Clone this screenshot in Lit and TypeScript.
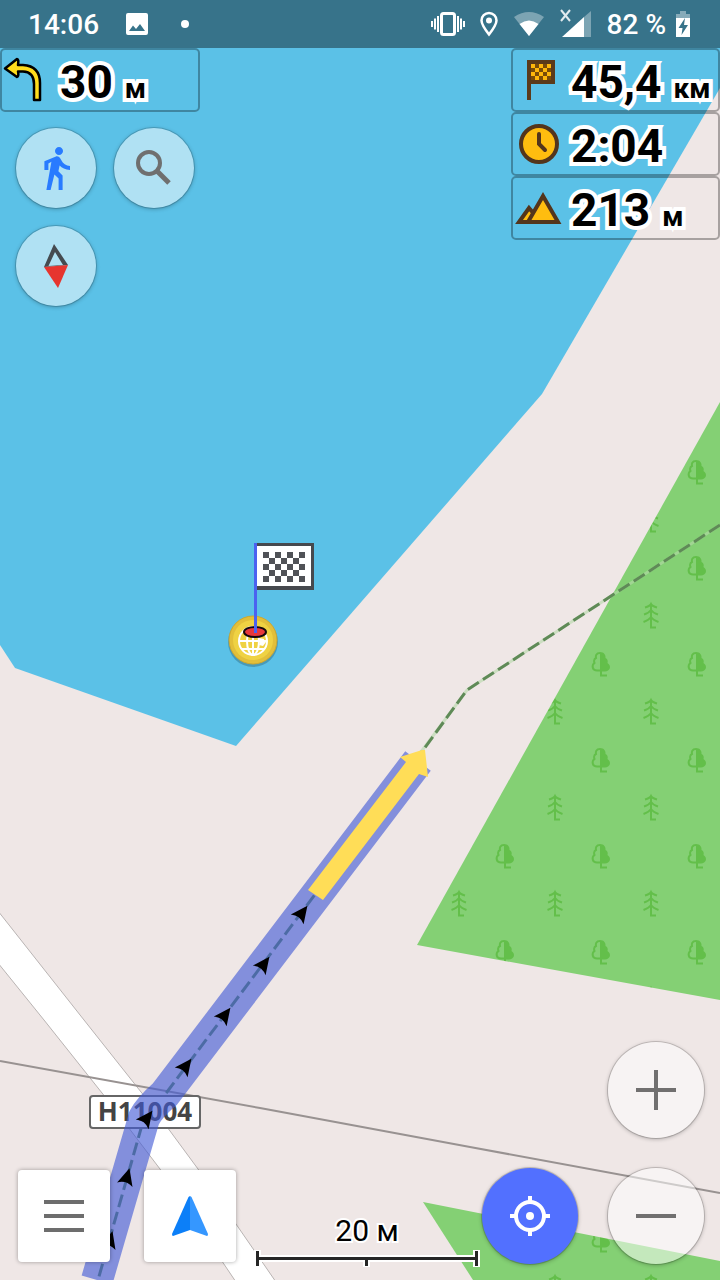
import { LitElement, html, svg, css, TemplateResult } from "lit";
import { customElement, property } from "lit/decorators.js";

// Direction arrows along the planned route: centre and heading in degrees.
const ROUTE_ARROWS = [
  { x: 302, y: 913, a: 37 },
  { x: 264, y: 964, a: 37 },
  { x: 225, y: 1015, a: 37 },
  { x: 186, y: 1066, a: 37 },
  { x: 147, y: 1118, a: 37 },
  { x: 127, y: 1177, a: 16 },
  { x: 110, y: 1240, a: 16 },
];

// Cells of a chequered flag, every second one filled.
const checks = (x: number, y: number, cols: number, rows: number, size: number, odd = 0) => {
  let d = "";
  for (let r = 0; r < rows; r++) {
    for (let c = 0; c < cols; c++) {
      if ((r + c) % 2 === odd) d += `M${x + c * size} ${y + r * size}h${size}v${size}h${-size}z`;
    }
  }
  return d;
};

@customElement("map-canvas")
export class MapCanvas extends LitElement {
  static styles = css`
    :host { display: block; }
    svg { display: block; width: 100%; height: 100%; }
    .shield { font: 700 26px "Noto Sans", "Open Sans", sans-serif; fill: #444; text-anchor: middle; }
  `;

  render() {
    return html`
      <svg viewBox="0 0 720 1280" preserveAspectRatio="xMidYMid slice" aria-hidden="true">
        <defs>
          <pattern id="forest" patternUnits="userSpaceOnUse" x="49" y="64" width="96" height="96">
            <rect width="96" height="96" fill="#84d074"></rect>
            <g fill="none" stroke="#63bf4a" stroke-width="2">
              <path d="M71 13C67 13 66.500 16 67 18C64.500 19 65 22 65.500 23C62.500 25 63 30.500 68 30.500H72"></path>
              <path fill="#63bf4a" stroke="none" d="M71 12C75 12 77 15 76.500 18C79 19 79 22 78.500 23C83 26 81 31.500 76 31.500H71z"></path>
              <path d="M72 31V35.500H78"></path>
              <path d="M26 60V83.500H31M20 63.500Q25 62 26 60Q27 62 32 63.500M19 70.500Q24 69 26 66Q28 69 33 70.500M18.500 78Q24 76 26 73Q28 76 33.500 78"></path>
            </g>
          </pattern>
        </defs>

        <rect width="720" height="1280" fill="#efe7e6"></rect>
        <path fill="#5bc1e7" d="M0 0H720V88L542 394L236 746L15 668L0 645z"></path>
        <path fill="url(#forest)" d="M720 402L417 945L720 1000z"></path>
        <path fill="url(#forest)" d="M423 1202L720 1261V1280H473z"></path>

        <path fill="#fff" stroke="#b9b4b3"
          d="M-2 911L84 1020L145 1097L198 1169L276 1282H236L160 1169L106 1098L44 1020L-2 963z"></path>
        <path fill="none" stroke="#989291" stroke-width="2" d="M0 1061L260 1108L470 1147L720 1193"></path>

        <g fill="none" stroke-width="3">
          <path stroke="#b4d9a8" stroke-opacity="0.6" d="M720 525L467 690L418 756"></path>
          <path stroke="#5f8a57" stroke-dasharray="13 5" d="M720 525L467 690L418 757L167 1092L144 1118L98 1280"></path>
        </g>

        <rect x="90" y="1096" width="110" height="32" rx="3" fill="#fff" stroke="#666" stroke-width="2"></rect>
        <text class="shield" x="145" y="1121">Н11004</text>

        <path fill="none" stroke="rgb(64,88,213)" stroke-opacity="0.620" stroke-width="32"
          d="M418 761L165 1094Q149 1108 144 1118L97 1280"></path>
        ${ROUTE_ARROWS.map(
          (p) => svg`<path transform="translate(${p.x} ${p.y}) rotate(${p.a})"
            d="M0 -9L8 8Q0 3 -8 8z"></path>`
        )}
        <path fill="#ffdd57" d="M308 890L406 762L400 757L422 750L425 750L428 777L419 774L323 900z"></path>

        <circle cx="253" cy="642" r="25" fill="#000" fill-opacity="0.200"></circle>
        <circle cx="253" cy="640" r="24" fill="#e2bf3a" stroke="#cda830"></circle>
        <circle cx="253" cy="640" r="20" fill="#efd243"></circle>
        <g fill="none" stroke="#fff" stroke-width="2">
          <circle cx="253" cy="641" r="14"></circle>
          <ellipse cx="253" cy="641" rx="6" ry="14"></ellipse>
          <path d="M253 627V655M239 641H267M242 649H264"></path>
        </g>
        <path fill="#fff" d="M259 638l5 1v3h2l-3 4l-4 -1l1 -3z"></path>
        <ellipse cx="255" cy="632" rx="11" ry="5" fill="#e8383c" stroke="#16090c" stroke-width="2"></ellipse>
        <path fill="#46494e" d="M256 543H314V590H256z"></path>
        <path fill="#fff" d="M256 546H311V586H256z"></path>
        <path fill="#505257" d="${checks(263, 552, 7, 5, 6)}"></path>
        <path fill="#4b62f0" d="M254 543H257V633H254z"></path>
      </svg>
    `;
  }
}

@customElement("nav-widget")
export class NavWidget extends LitElement {
  @property() value = "";
  @property() unit = "";

  static styles = css`
    :host {
      box-sizing: border-box;
      display: flex;
      align-items: center;
      gap: 10px;
      height: 64px;
      border: 2px solid rgba(0, 0, 0, 0.3);
      border-radius: 5px;
    }
    .text {
      display: flex;
      align-items: baseline;
      gap: 12px;
      padding-top: 4px;
      color: #000;
      font: 700 46px/54px Roboto, sans-serif;
      white-space: nowrap;
      -webkit-text-stroke: 8px #fff;
      paint-order: stroke fill;
    }
    .unit { font-size: 28px; line-height: 28px; }
  `;

  render() {
    return html`
      <slot></slot>
      <div class="text">
        <span>${this.value}</span>${this.unit ? html`<span class="unit">${this.unit}</span>` : null}
      </div>
    `;
  }
}

@customElement("app-root")
export class AppRoot extends LitElement {
  static styles = css`
    :host { display: block; font-family: Roboto, sans-serif; }
    .screen {
      position: relative;
      display: flex;
      flex-direction: column;
      min-height: 100vh;
      overflow: hidden;
    }
    .map { position: absolute; inset: 0; }
    svg { display: block; flex: none; overflow: visible; }

    .status {
      position: relative;
      display: flex;
      align-items: center;
      height: 48px;
      padding: 0 28px;
      background: #37738a;
      color: #fff;
      font-size: 28px;
      font-weight: 500;
      line-height: 48px;
      white-space: nowrap;
    }
    .clock { padding-top: 2px; margin-right: 26px; }
    .notices { display: flex; align-items: center; gap: 32px; }
    .system { display: flex; align-items: center; gap: 15px; margin-left: auto; }
    .charge { padding-top: 2px; }
    .battery { display: flex; align-items: center; gap: 8px; }

    .top {
      position: relative;
      display: flex;
      justify-content: space-between;
      align-items: flex-start;
    }
    .turn { width: 200px; }
    .info { width: 209px; }
    .quick {
      display: grid;
      grid-template-columns: 80px 80px;
      gap: 18px;
      padding: 16px;
    }

    button {
      display: flex;
      align-items: center;
      justify-content: center;
      flex: none;
      margin: 0;
      padding: 0;
      border: 0;
      cursor: pointer;
    }
    .round {
      width: 80px;
      height: 80px;
      border-radius: 50%;
      background: rgba(255, 255, 255, 0.52);
      box-shadow: 0 0 0 1px rgba(0, 0, 0, 0.15), 0 1px 4px rgba(0, 0, 0, 0.3);
    }
    .large { width: 96px; height: 96px; }
    .accent { background: #5270ff; }
    .square {
      width: 92px;
      height: 92px;
      border-radius: 4px;
      background: #fff;
      box-shadow: 0 0 4px rgba(0, 0, 0, 0.35);
    }

    .bottom {
      position: relative;
      display: flex;
      align-items: flex-end;
      margin-top: auto;
      padding: 0 16px 16px 18px;
    }
    .menu { display: flex; gap: 34px; padding-bottom: 2px; }
    .scale {
      display: flex;
      flex-direction: column;
      align-items: center;
      margin-left: 20px;
      color: #000;
      font-size: 30px;
      line-height: 34px;
      -webkit-text-stroke: 4px #fff;
      paint-order: stroke fill;
    }
    .actions { display: flex; align-items: flex-end; gap: 30px; margin-left: auto; }
    .zoom { display: flex; flex-direction: column; gap: 30px; }
  `;

  private statusBar(): TemplateResult {
    return html`
      <header class="status">
        <span class="clock">14:06</span>
        <span class="notices">
          <svg width="24" height="24" viewBox="0 0 24 24" fill="#fff" fill-rule="evenodd">
            <path d="M3 1H21Q23 1 23 3V21Q23 23 21 23H3Q1 23 1 21V3Q1 1 3 1zM4 19H20L15 12L11 17L8 13.500z"></path>
          </svg>
          <svg width="10" height="10" viewBox="0 0 10 10"><circle cx="4" cy="5" r="4" fill="#fff"></circle></svg>
        </span>
        <span class="system">
          <svg width="34" height="24" viewBox="0 0 34 24" fill="none" stroke="#fff">
            <rect x="10.500" y="1.500" width="13" height="21" rx="2" stroke-width="3"></rect>
            <path stroke-width="2" d="M7 4V20M4 6.500V17.500M1 9V15M27 4V20M30 6.500V17.500M33 9V15"></path>
          </svg>
          <svg width="18" height="24" viewBox="0 0 18 24">
            <path fill="none" stroke="#fff" stroke-width="2.500" d="M9 22.500C4 16 1.500 12.500 1.500 8.500A7.500 7.500 0 0 1 16.500 8.500C16.500 12.500 14 16 9 22.500z"></path>
            <circle cx="9" cy="8.500" r="3" fill="#fff"></circle>
          </svg>
          <svg width="32" height="24" viewBox="0 0 32 24" fill="#fff">
            <path fill-opacity="0.350" d="M16 24L1 5Q16 -5 31 5z"></path>
            <path d="M16 24L6.500 12Q16 5 25.500 12z"></path>
          </svg>
          <svg width="32" height="26" viewBox="0 0 32 26" fill="#fff">
            <path fill-opacity="0.350" d="M31 0V26H24V6z"></path>
            <path d="M24 6V26H2z"></path>
            <path fill="none" stroke="#fff" stroke-width="2" stroke-opacity="0.850" d="M1 -1L10 10M10 -1L1 10"></path>
          </svg>
          <span class="battery">
            <span class="charge">82 %</span>
            <svg width="18" height="28" viewBox="0 0 18 28">
              <path fill="#fff" fill-opacity="0.400" d="M6 1H12V4H16V8H2V4H6z"></path>
              <path fill="#fff" d="M2 8H16V27H2z"></path>
              <path fill="#37738a" d="M11 8L4.500 18H8.500L7.500 25L14 15H10z"></path>
            </svg>
          </span>
        </span>
      </header>
    `;
  }

  render() {
    return html`
      <main class="screen">
        <map-canvas class="map"></map-canvas>
        ${this.statusBar()}

        <section class="top">
          <div>
            <nav-widget class="turn" value="30" unit="м">
              <svg width="48" height="60" viewBox="2 50 48 60">
                <path fill="#ffdd1c" stroke="#000" stroke-width="2.500" stroke-linejoin="round"
                  d="M5 68.500L17 59Q19 59 18 65H23Q40 66 40 83V100H34V84Q34 72 23 71.500H18Q19 76 17 77z"></path>
              </svg>
            </nav-widget>
            <div class="quick">
              <button class="round" aria-label="Пешком">
                <svg width="48" height="48" viewBox="0 0 24 24" fill="#287bff">
                  <path d="M13.500 5.500c1.100 0 2-.9 2-2s-.9-2-2-2-2 .9-2 2 .9 2 2 2z"></path>
                  <path d="M6.200 13V8.600L12 6.200C13.300 6 14 6.800 14.600 8C15.500 9.800 17 10.800 19 11V13C16.600 13 15 12 13.800 10.800L13.200 13.600L15.300 15.700V23H13.300V17.200L11.200 15.200L9.300 23H7.200L9.700 8.900L8.200 9.700V13z"></path>
                </svg>
              </button>
              <button class="round" aria-label="Поиск">
                <svg width="48" height="48" viewBox="0 0 48 48" fill="none" stroke="#6f6f6f">
                  <circle cx="19" cy="19" r="11" stroke-width="4"></circle>
                  <path stroke-width="5" d="M27 27L39 39"></path>
                </svg>
              </button>
              <button class="round" aria-label="Компас">
                <svg width="48" height="48" viewBox="0 0 48 48">
                  <path fill="#454b50" fill-rule="evenodd" d="M22 2L36 23L25 24L12 25zM23 10L16.500 24L31 23z"></path>
                  <path fill="#e6352f" d="M12 25L36 23L26 46z"></path>
                </svg>
              </button>
            </div>
          </div>

          <div class="info">
            <nav-widget value="45,4" unit="км">
              <svg width="48" height="60" viewBox="513 50 48 60">
                <path fill="#5b3a1a" d="M527 60H555V84H531V100H527z"></path>
                <path fill="#ffb70a" d="M531 64H551V80H531z"></path>
                <path fill="#7a4c08" d="${checks(531, 64, 5, 4, 4, 1)}"></path>
              </svg>
            </nav-widget>
            <nav-widget value="2:04">
              <svg width="48" height="60" viewBox="513 114 48 60">
                <circle cx="539" cy="144" r="18" fill="#ffbd0f" stroke="#53351c" stroke-width="4"></circle>
                <path fill="none" stroke="#53351c" stroke-width="4" stroke-linecap="round" d="M539 134V144L545 150"></path>
              </svg>
            </nav-widget>
            <nav-widget value="213" unit="м">
              <svg width="48" height="60" viewBox="513 178 48 60">
                <g fill="#ffbd0f" stroke="#53351c" stroke-width="4">
                  <path d="M529 208L541 222H519z"></path>
                  <path d="M543 196L558 222H528z"></path>
                </g>
              </svg>
            </nav-widget>
          </div>
        </section>

        <section class="bottom">
          <div class="menu">
            <button class="square" aria-label="Меню">
              <svg width="40" height="32" viewBox="0 0 40 32">
                <path stroke="#6d6d6d" stroke-width="4" d="M0 2H40M0 16H40M0 30H40"></path>
              </svg>
            </button>
            <button class="square" aria-label="Навигация">
              <svg width="36" height="40" viewBox="0 0 36 40">
                <path fill="#0c7ff8" d="M18 0V34L1 40Q0 40 0 38L16.500 1z"></path>
                <path fill="#3597ff" d="M18 0L19.500 1L36 38Q36 40 35 40L18 34z"></path>
              </svg>
            </button>
          </div>

          <div class="scale">
            <span>20 м</span>
            <svg width="222" height="16" viewBox="0 0 222 16">
              <path fill="none" stroke="#fff" stroke-width="7" d="M1.500 2V19M220.500 2V19M1 10.500H221M110.500 10V19"></path>
              <path fill="none" stroke="#262626" stroke-width="3" d="M1.500 3V18M220.500 3V18M1 10.500H221M110.500 10V18"></path>
            </svg>
          </div>

          <div class="actions">
            <button class="round large accent" aria-label="Моё местоположение">
              <svg width="40" height="40" viewBox="0 0 40 40">
                <circle cx="20" cy="20" r="14" fill="none" stroke="#fff" stroke-width="4"></circle>
                <circle cx="20" cy="20" r="4" fill="#fff"></circle>
                <path stroke="#fff" stroke-width="4" d="M20 0V6M20 34V40M0 20H6M34 20H40"></path>
              </svg>
            </button>
            <div class="zoom">
              <button class="round large" aria-label="Приблизить">
                <svg width="40" height="40" viewBox="0 0 40 40"><path stroke="#716f6f" stroke-width="4" d="M20 0V40M0 20H40"></path></svg>
              </button>
              <button class="round large" aria-label="Отдалить">
                <svg width="40" height="40" viewBox="0 0 40 40"><path stroke="#716f6f" stroke-width="4" d="M0 20H40"></path></svg>
              </button>
            </div>
          </div>
        </section>
      </main>
    `;
  }
}
